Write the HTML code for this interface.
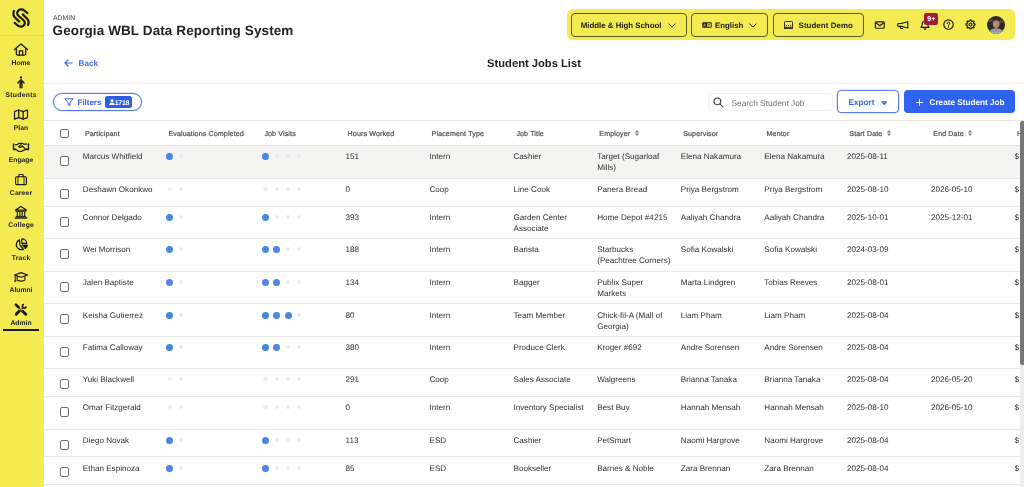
<!DOCTYPE html>
<html lang="en"><head><meta charset="utf-8"><title>Student Jobs List</title>
<style>
*{box-sizing:border-box;margin:0;padding:0}
html,body{text-rendering:geometricPrecision;width:1024px;height:487px;overflow:hidden;background:#fff;font-family:"Liberation Sans",sans-serif;color:#222}
.abs{position:absolute}
#side{position:absolute;left:0;top:0;width:44px;height:487px;background:#f4eb52}
#side .div{position:absolute;left:0;top:35px;width:44px;height:1px;background:#e2d94a}
.nav{position:absolute;left:0;width:42px;text-align:center;font-weight:700;font-size:6.75px;color:#1a1a1a;line-height:8px;letter-spacing:0}
.nav svg{position:absolute;left:50%;transform:translateX(-50%)}
.nav span{position:absolute;left:0;width:42px;top:0}
#top .admin{position:absolute;left:53px;top:14.6px;font-size:6.8px;line-height:8px;color:#3a3a3a;letter-spacing:0.05px}
#top h1{position:absolute;left:52.6px;top:22.5px;font-size:13.5px;line-height:16px;font-weight:700;color:#222;white-space:nowrap;letter-spacing:0.1px}
#tool{position:absolute;left:566.6px;top:9px;width:448px;height:31.4px;background:#f4eb52;border-radius:6px}
.tb{position:absolute;top:4px;height:23.5px;border:1px solid #5c5823;border-radius:4px;font-weight:700;font-size:7.85px;line-height:23.6px;color:#1a1a1a;white-space:nowrap}
.back{position:absolute;left:78.6px;top:58.6px;font-size:8.2px;line-height:10px;font-weight:700;color:#3c69ee}
.title{position:absolute;left:44px;width:980px;top:56.6px;text-align:center;font-size:11.2px;line-height:14px;font-weight:700;color:#222}
.hr{position:absolute;left:44px;right:0;height:1px;background:#ececec}
.filters{position:absolute;left:53px;top:92.8px;width:88.8px;height:18.3px;border:1px solid #5577e2;box-shadow:0 0 0 0.6px #c9d5f7;border-radius:10px;background:#fff}
.filters .t{position:absolute;left:23.6px;top:4.3px;font-size:7.9px;line-height:10px;font-weight:700;color:#3a62dd}
.filters .badge{position:absolute;left:51.2px;top:2.3px;width:26.5px;height:11.6px;border-radius:2.5px;background:#2f5fe0;color:#fff;font-size:6.9px;line-height:15.1px;font-weight:700;padding-left:9.5px;letter-spacing:-0.2px}
.search{position:absolute;left:708px;top:93px;width:125px;height:18px;border:1px solid #f0f0f0;border-radius:3px;background:#fff}
.search .ph{position:absolute;left:22.5px;top:4.2px;font-size:8.3px;line-height:10px;color:#6f6f6f}
.export{position:absolute;left:837px;top:90px;width:62px;height:23px;border:1px solid #5b7fe6;box-shadow:0 0 0 0.6px #cdd8f8;border-radius:4px;background:#fff;color:#3565e8;font-weight:700;font-size:8.2px;line-height:23.3px;padding-left:10.5px}
.create{position:absolute;left:904px;top:90px;width:111px;height:23px;border-radius:4px;background:#2f62ef;color:#fff;font-weight:700;font-size:8.2px;line-height:25.3px;padding-left:25.5px;white-space:nowrap}
#tbl{position:absolute;left:44px;top:120px;width:980px;height:367px;overflow:hidden;font-size:8.1px;line-height:11.3px;color:#2e2e2e}
.thead{position:absolute;left:0;top:0;width:980px;height:26px;border-top:1px solid #e6e6e6;border-bottom:1px solid #e3e3e3;background:#fff}
.th{position:absolute;top:8.6px;font-size:7.1px;line-height:9px;color:#505050;white-space:nowrap;letter-spacing:0.12px;font-weight:400;-webkit-text-stroke:0.22px #505050}
.srt{margin-left:4.6px;position:relative;top:0.3px}
.tr{position:absolute;left:0;width:980px;border-bottom:1px solid #e9e9e9;background:#fff}
.tr.first{background:#f4f4f2}
.td{position:absolute;top:5.5px;white-space:nowrap}
.td.dots{top:6.7px;line-height:0;font-size:0}
.d{display:inline-block;width:4.2px;height:4.2px;border-radius:50%;background:#ebebeb;margin:1.4px 3.55px 0 3.55px;vertical-align:top}
.d.on{width:7px;height:7px;background:#4a86e2;margin:0 2.15px 0 2.15px}
.cb{position:absolute;width:9.5px;height:9.5px;border:1.1px solid #6e6e6e;border-radius:2px;background:#fff}
.track{position:absolute;left:1019.7px;top:120.5px;width:4.3px;height:367px;background:#eeede9}
.thumb{position:absolute;left:1019.7px;top:120.8px;width:4.3px;height:243.8px;background:#767676;border-radius:2.5px 0 0 2.5px}
</style></head>
<body>
<div id="app" style="position:absolute;left:0;top:0;width:1024px;height:487px;overflow:hidden;will-change:transform">
<div id="side">
  <svg class="abs" style="left:11.1px;top:8.2px" width="20" height="20" viewBox="-10 -10 20 20" fill="none" stroke="#1a1a1a" stroke-width="2.15">
    <path d="M7.1,-4.2 L3.4,-7.4 C1.5,-9 -1.5,-9 -2.9,-7.3 C-4.3,-5.6 -4,-3.4 -2.6,-2.2 L2.6,2.2 C4,3.4 4.3,5.6 2.9,7.3 C1.5,9 -1.5,9 -3.4,7.4 L-7.1,4.2"/>
    <path d="M-6.8,-7.9 C-8,-5 -8,-2.5 -6,-0.5 L-1.2,4.1"/>
    <path d="M6.8,7.9 C8,5 8,2.5 6,0.5 L1.2,-4.1"/>
  </svg>
  <div class="div"></div>
  <div class="nav" style="top:0"><svg style="top:42.3px" width="15" height="14" viewBox="0 0 15 14" fill="none" stroke="#1a1a1a" stroke-width="1.25" stroke-linejoin="round" stroke-linecap="round"><path d="M1 7.5L7.5 2.1L14 7.5"/><path d="M2.8 6.4v5.4Q2.8 13 4 13h7Q12.2 13 12.2 11.8V6.4"/><path d="M5.8 13V8.8h3.4V13"/></svg><span style="top:59.5px;letter-spacing:0.00px;padding-left:0.00px">Home</span></div>
<div class="nav" style="top:0"><svg style="top:76.0px" width="8" height="13" viewBox="0 0 8 13" fill="none" stroke="#1a1a1a" stroke-width="1.25" stroke-linejoin="round" stroke-linecap="round"><circle cx="4" cy="1.5" r="1.15" fill="#1a1a1a" stroke="none"/><path d="M0.9 7L4 3.6L7.1 7" stroke-width="1.3"/><path d="M2.4 5.2L4 3.6L5.6 5.2V12.2H2.4z" fill="#2a2a18" stroke="none"/><path d="M4 9v3.2" stroke="#6a6628" stroke-width="0.5"/></svg><span style="top:92.0px;letter-spacing:0.30px;padding-left:0.30px">Students</span></div>
<div class="nav" style="top:0"><svg style="top:109.2px" width="15" height="11" viewBox="0 0 15 11" fill="none" stroke="#1a1a1a" stroke-width="1.25" stroke-linejoin="round" stroke-linecap="round"><path d="M1 2.6L5.2 1l4.4 1.6L14 1v7.6L9.6 10.2L5.2 8.6L1 10.2z"/><path d="M5.2 1v7.6M9.6 2.6v7.6"/></svg><span style="top:124.5px;letter-spacing:0.00px;padding-left:0.00px">Plan</span></div>
<div class="nav" style="top:0"><svg style="top:142.2px" width="17" height="10" viewBox="0 0 17 10" fill="none" stroke="#1a1a1a" stroke-width="1.25" stroke-linejoin="round" stroke-linecap="round"><path d="M1 2v5.5h1.8M16 2v5.5h-1.8" stroke-width="1.6"/><path d="M2.8 2.6h2l2-1.3h3l1.2 0.8h3.2M2.8 7l3.6 2.4c0.8 0.5 1.6 0.5 2.4 0L14.2 7M8.6 2.6L6.3 4.8c0.9 0.9 2 0.7 2.8-0.2l0.7-0.6L12.5 6.6"/></svg><span style="top:157.0px;letter-spacing:0.00px;padding-left:0.00px">Engage</span></div>
<div class="nav" style="top:0"><svg style="top:173.2px" width="14" height="13" viewBox="0 0 14 13" fill="none" stroke="#1a1a1a" stroke-width="1.25" stroke-linejoin="round" stroke-linecap="round"><g transform="translate(0.7,0.65) scale(0.9)"><rect x="1" y="3.4" width="12" height="8.8" rx="1.3"/><path d="M4.6 3.4V1.6c0-0.4 0.3-0.7 0.7-0.7h3.4c0.4 0 0.7 0.3 0.7 0.7v1.8"/><path d="M3.6 3.4v8.8M10.4 3.4v8.8" stroke-width="1"/></g></svg><span style="top:189.5px;letter-spacing:0.17px;padding-left:0.17px">Career</span></div>
<div class="nav" style="top:0"><svg style="top:205.2px" width="14" height="14" viewBox="0 0 14 14" fill="none" stroke="#1a1a1a" stroke-width="1.25" stroke-linejoin="round" stroke-linecap="round"><path d="M1.5 5L7 1.4L12.5 5z"/><path d="M2 6.3h10" stroke-width="1"/><path d="M3.3 7v3.8M5.8 7v3.8M8.2 7v3.8M10.7 7v3.8" stroke-width="1.1"/><path d="M2.2 11.4h9.6" stroke-width="1"/><path d="M1.2 13h11.6" stroke-width="1.3"/></svg><span style="top:222.0px;letter-spacing:0.17px;padding-left:0.17px">College</span></div>
<div class="nav" style="top:0"><svg style="top:238.0px" width="15" height="13" viewBox="0 0 15 13" fill="none" stroke="#1a1a1a" stroke-width="1.25" stroke-linejoin="round" stroke-linecap="round"><g transform="translate(0.5,0)"><path d="M5.4 1.9A5.1 5.1 0 1 0 9.4 11.3L5.9 7z"/><path d="M7.8 1V5.3H12.7A4.8 4.8 0 0 0 7.8 1z"/><path d="M8.2 7H13.6A5.6 5.6 0 0 1 11.5 10.8z" fill="#1a1a1a" stroke-width="0.8"/></g></svg><span style="top:254.5px;letter-spacing:0.20px;padding-left:0.20px">Track</span></div>
<div class="nav" style="top:0"><svg style="top:271.2px" width="17" height="12" viewBox="0 0 17 12" fill="none" stroke="#1a1a1a" stroke-width="1.25" stroke-linejoin="round" stroke-linecap="round"><g transform="translate(0.9,0.7) scale(0.9)"><path d="M1.2 3.6L8.5 1l7.3 2.6L8.5 6.2z"/><path d="M4.2 5.2v4.2c1.2 1.4 7.4 1.4 8.6 0V5.2"/><path d="M2 4.2v5.6" stroke-width="1.1"/><path d="M1.4 10.6h1.3" stroke-width="1.4"/></g></svg><span style="top:287.0px;letter-spacing:0.00px;padding-left:0.00px">Alumni</span></div>
<div class="nav" style="top:0"><svg style="top:299.0px" width="24" height="20" viewBox="0 0 24 20" fill="none" stroke="#1a1a1a" stroke-width="1.25" stroke-linejoin="round" stroke-linecap="round"><path d="M6.9 5.6L9.5 8.2" stroke-width="2.7"/><path d="M9.5 8.2L13.6 12.3" stroke-width="1"/><path d="M13.7 12.4L16.8 15.3" stroke-width="2.9"/><path d="M14.9 5.3A1.9 1.9 0 1 0 17.1 7.5" stroke-width="1.8" stroke-linecap="butt"/><path d="M14 8.6L12.9 9.7" stroke-width="1.6" stroke-linecap="butt"/><path d="M10.4 12L7.3 15.1" stroke-width="2.9"/></svg><span style="top:319.5px;letter-spacing:0.00px;padding-left:0.00px">Admin</span></div>
<div class="abs" style="left:3.3px;top:329px;width:35.6px;height:2px;background:#1a1a1a"></div>
</div>
<div id="top">
  <div class="admin">ADMIN</div>
  <h1>Georgia WBL Data Reporting System</h1>
  <div id="tool">
    <div class="tb" style="left:4.2px;width:115.8px;padding-left:9px">Middle &amp; High School</div>
    <div class="tb" style="left:124.4px;width:77px;padding-left:23px">English</div>
    <div class="tb" style="left:206.3px;width:91.4px;padding-left:24.7px;letter-spacing:0.09px">Student Demo</div>
    <svg class="abs" style="left:101.0px;top:13.5px" width="8" height="5" viewBox="0 0 8 5" fill="none" stroke="#1a1a1a" stroke-width="0.95" stroke-linejoin="round" stroke-linecap="round"><path d="M0.7 0.8l3.3 3.3l3.3-3.3"/></svg>
<svg class="abs" style="left:182.2px;top:13.5px" width="8" height="5" viewBox="0 0 8 5" fill="none" stroke="#1a1a1a" stroke-width="0.95" stroke-linejoin="round" stroke-linecap="round"><path d="M0.7 0.8l3.3 3.3l3.3-3.3"/></svg>
<svg class="abs" style="left:135.0px;top:13.1px" width="10" height="6" viewBox="0 0 10 6" ><rect x="0.3" y="0.3" width="9.4" height="5.4" rx="0.9" fill="#1a1a1a" stroke="none"/><rect x="5.3" y="1.2" width="3.5" height="3.6" fill="#f4eb52" stroke="none"/><path d="M1.5 4.6l1.1-3l1.1 3M1.9 3.7h1.4" stroke-width="0.55" stroke="#f4eb52" fill="none"/><path d="M6 2.3h2.1M7.05 1.8v0.5M6.3 4.2c0.9-0.4 1.3-1 1.4-1.9" stroke-width="0.5" stroke="#1a1a1a" fill="none"/></svg>
<svg class="abs" style="left:217.2px;top:12.0px" width="9" height="7.8" viewBox="0 0 9 7.8" fill="none" stroke="#1a1a1a" stroke-width="1.15" stroke-linejoin="round" stroke-linecap="round"><path d="M0.5 7.4V1.3Q0.5 0.5 1.3 0.5H7.7Q8.5 0.5 8.5 1.3V7.4" stroke-width="0.9"/><circle cx="2.3" cy="4.7" r="0.6" fill="#1a1a1a" stroke="none"/><circle cx="4.5" cy="4.7" r="0.6" fill="#1a1a1a" stroke="none"/><circle cx="6.7" cy="4.7" r="0.6" fill="#1a1a1a" stroke="none"/><path d="M1.6 7.6V6.3h1.4V7.6M3.8 7.6V6.3h1.4V7.6M6 7.6V6.3h1.4V7.6" stroke-width="0.7" fill="#1a1a1a"/><path d="M0 7.5h9" stroke-width="0.6"/></svg>
<svg class="abs" style="left:307.8px;top:11.8px" width="11" height="8" viewBox="0 0 11 8" fill="none" stroke="#1a1a1a" stroke-width="1.15" stroke-linejoin="round" stroke-linecap="round"><rect x="1.3" y="0.8" width="8.9" height="6.4" rx="1"/><path d="M1.8 1.7L5.75 4.7L9.7 1.7"/></svg>
<svg class="abs" style="left:330.1px;top:11.7px" width="12" height="8.6" viewBox="0 0 12 8.6" fill="none" stroke="#1a1a1a" stroke-width="1.15" stroke-linejoin="round" stroke-linecap="round"><path d="M10.8 0.8v6.2L4.2 5.4H1.6c-0.5 0-0.9-0.4-0.9-0.9V3.4c0-0.5 0.4-0.9 0.9-0.9h2.6z"/><path d="M3.2 5.6l0.6 1.8c0.2 0.5 0.7 0.6 1.2 0.4l0.6-0.2" /></svg>
<svg class="abs" style="left:353.9px;top:11.4px" width="10" height="10.4" viewBox="0 0 10 10.4" fill="none" stroke="#1a1a1a" stroke-width="1.15" stroke-linejoin="round" stroke-linecap="round"><path d="M1 7.4c1-1 1.2-1.8 1.2-3.4a2.8 2.8 0 0 1 5.6 0c0 1.6 0.2 2.4 1.2 3.4z"/><path d="M4.2 8.8c0.3 0.8 1.3 0.8 1.6 0" /></svg>
<div class="abs" style="left:357.9px;top:4.0px;width:13.5px;height:11.8px;border-radius:2.2px;background:#a11d3c;color:#fff;font-weight:700;font-size:7px;line-height:13.6px;text-align:center;letter-spacing:-0.1px">9+</div>
<svg class="abs" style="left:376.2px;top:9.9px" width="11" height="11" viewBox="0 0 11 11" fill="none" stroke="#1a1a1a" stroke-width="1.15" stroke-linejoin="round" stroke-linecap="round"><circle cx="5.5" cy="5.5" r="4.7"/><path d="M4.2 4.4a1.3 1.3 0 1 1 1.9 1.2c-0.4 0.2-0.6 0.5-0.6 0.9" stroke-width="1"/><circle cx="5.5" cy="7.9" r="0.6" fill="#1a1a1a" stroke="none"/></svg>
<svg class="abs" style="left:398.8px;top:9.9px" width="11" height="11" viewBox="0 0 11 11" fill="none" stroke="#1a1a1a" stroke-width="1.15" stroke-linejoin="round" stroke-linecap="round"><circle cx="5.5" cy="5.5" r="1.5"/><path d="M8.92 4.74L10.01 4.93L10.01 6.07L8.92 6.26L8.46 7.38L9.10 8.29L8.29 9.10L7.38 8.46L6.26 8.92L6.07 10.01L4.93 10.01L4.74 8.92L3.62 8.46L2.71 9.10L1.90 8.29L2.54 7.38L2.08 6.26L0.99 6.07L0.99 4.93L2.08 4.74L2.54 3.62L1.90 2.71L2.71 1.90L3.62 2.54L4.74 2.08L4.93 0.99L6.07 0.99L6.26 2.08L7.38 2.54L8.29 1.90L9.10 2.71L8.46 3.62Z"/></svg>
<svg class="abs" style="left:420.5px;top:7.0px" width="18" height="18" viewBox="0 0 18 18"><defs><clipPath id="av"><circle cx="9" cy="9" r="9"/></clipPath></defs><g clip-path="url(#av)"><rect width="18" height="18" fill="#2d262a"/><ellipse cx="4" cy="4.6" rx="3.6" ry="1.6" fill="#6a4a2a" opacity="0.85"/><ellipse cx="14.4" cy="5.2" rx="3.2" ry="1.6" fill="#6a4a2a" opacity="0.85"/><path d="M1.2 18C2.6 13.6 5.8 12.2 9.2 12.5C12.6 12.2 15.6 13.6 17 18z" fill="#a4a8b2"/><path d="M3 15.5h12M4 14h10" stroke="#7f8590" stroke-width="0.5" fill="none"/><rect x="7.7" y="10.2" width="3" height="3.2" fill="#a07462"/><path d="M7.5 12.6L9.2 15.2L10.9 12.6z" fill="#a87c69"/><ellipse cx="9.2" cy="7.7" rx="3.4" ry="4.1" fill="#b48a76"/><path d="M5.7 7C5.5 3.2 7.3 2.2 9.2 2.2S12.9 3.2 12.7 7C12 5 11 4.6 9.2 4.6S6.4 5 5.7 7z" fill="#3d2b22"/></g></svg>
  </div>
</div>
<svg class="abs" style="left:64px;top:58.5px" width="9" height="8" viewBox="0 0 9 8" fill="none" stroke="#3c69ee" stroke-width="1.2" stroke-linecap="round" stroke-linejoin="round"><path d="M8 4H1M4 1L1 4l3 3"/></svg>
<div class="back">Back</div>
<div class="title">Student Jobs List</div>
<div class="hr" style="top:82.6px"></div>
<div class="filters">
  <svg class="abs" style="left:9.6px;top:4.4px" width="10" height="9" viewBox="0 0 10 9" fill="none" stroke="#3a62dd" stroke-width="1" stroke-linejoin="round"><path d="M0.8 0.8h8.4L5.9 4.6v3L4.1 6.8V4.6z"/></svg>
  <span class="t">Filters</span>
  <span class="badge">1718
    <svg class="abs" style="left:3.4px;top:2.8px" width="6" height="6" viewBox="0 0 6 6" fill="#fff"><circle cx="3" cy="1.6" r="1.5"/><path d="M0.2 6c0-1.7 1.2-2.5 2.8-2.5S5.8 4.3 5.8 6z"/></svg>
  </span>
</div>
<div class="search">
  <svg class="abs" style="left:3.5px;top:3.4px" width="11" height="11" viewBox="0 0 11 11" fill="none" stroke="#333" stroke-width="1.05" stroke-linecap="round"><circle cx="4.4" cy="4.4" r="3.4"/><path d="M7 7L9.8 9.8"/></svg>
  <span class="ph">Search Student Job</span>
</div>
<div class="export">Export
  <svg class="abs" style="left:42.8px;top:9.9px" width="6.4" height="4.4" viewBox="0 0 6.4 4.4" fill="none" stroke="#3565e8" stroke-width="1.2" stroke-linejoin="round"><path d="M0.9 0.8h4.6L3.2 3.5z"/></svg>
</div>
<div class="create">Create Student Job
  <svg class="abs" style="left:11.5px;top:8.7px" width="7" height="7" viewBox="0 0 7 7" stroke="#fff" stroke-width="0.9" stroke-linecap="round"><path d="M3.5 0.3v6.4M0.3 3.5h6.4"/></svg>
</div>
<div id="tbl">
<div class="thead">
<span class="cb" style="left:15.5px;top:7.5px"></span>
<span class="th" style="left:40.9px">Participant</span>
<span class="th" style="left:124.4px">Evaluations Completed</span>
<span class="th" style="left:220.4px">Job Visits</span>
<span class="th" style="left:303.6px">Hours Worked</span>
<span class="th" style="left:387.6px">Placement Type</span>
<span class="th" style="left:472.4px">Job Title</span>
<span class="th" style="left:555.3px">Employer<svg class="srt" viewBox="0 0 6 9" width="4" height="6"><path d="M3 0 L6 3.6 H0 Z M3 9 L6 5.4 H0 Z" fill="#7a7a7a"/></svg></span>
<span class="th" style="left:639.2px">Supervisor</span>
<span class="th" style="left:722.6px">Mentor</span>
<span class="th" style="left:805.3px">Start Date<svg class="srt" viewBox="0 0 6 9" width="4" height="6"><path d="M3 0 L6 3.6 H0 Z M3 9 L6 5.4 H0 Z" fill="#7a7a7a"/></svg></span>
<span class="th" style="left:889.3px">End Date<svg class="srt" viewBox="0 0 6 9" width="4" height="6"><path d="M3 0 L6 3.6 H0 Z M3 9 L6 5.4 H0 Z" fill="#7a7a7a"/></svg></span>
<span class="th" style="left:973.0px">H</span>
</div>
<div class="tr first" style="top:26.0px;height:33.0px">
<span class="cb" style="left:15.5px;top:10.2px"></span>
<span class="td" style="left:38.8px;top:5.0px">Marcus Whitfield</span>
<span class="td dots" style="left:120.1px;top:6.5px"><i class="d on"></i><i class="d"></i></span>
<span class="td dots" style="left:215.8px;top:6.5px"><i class="d on"></i><i class="d"></i><i class="d"></i><i class="d"></i></span>
<span class="td" style="left:301.5px;top:5.0px">151</span>
<span class="td" style="left:385.5px;top:5.0px">Intern</span>
<span class="td" style="left:469.5px;top:5.0px">Cashier</span>
<span class="td" style="left:553.2px;top:5.0px">Target (Sugarloaf<br>Mills)</span>
<span class="td" style="left:636.8px;top:5.0px">Elena Nakamura</span>
<span class="td" style="left:720.3px;top:5.0px">Elena Nakamura</span>
<span class="td" style="left:803.0px;top:5.0px">2025-08-11</span>
<span class="td" style="left:887.0px;top:5.0px"></span>
<span class="td" style="left:970.5px;top:5.0px">$</span>
</div>
<div class="tr" style="top:59.0px;height:28.0px">
<span class="cb" style="left:15.5px;top:10.2px"></span>
<span class="td" style="left:38.8px;top:5.0px">Deshawn Okonkwo</span>
<span class="td dots" style="left:120.1px;top:6.5px"><i class="d"></i><i class="d"></i></span>
<span class="td dots" style="left:215.8px;top:6.5px"><i class="d"></i><i class="d"></i><i class="d"></i><i class="d"></i></span>
<span class="td" style="left:301.5px;top:5.0px">0</span>
<span class="td" style="left:385.5px;top:5.0px">Coop</span>
<span class="td" style="left:469.5px;top:5.0px">Line Cook</span>
<span class="td" style="left:553.2px;top:5.0px">Panera Bread</span>
<span class="td" style="left:636.8px;top:5.0px">Priya Bergstrom</span>
<span class="td" style="left:720.3px;top:5.0px">Priya Bergstrom</span>
<span class="td" style="left:803.0px;top:5.0px">2025-08-10</span>
<span class="td" style="left:887.0px;top:5.0px">2026-05-10</span>
<span class="td" style="left:970.5px;top:5.0px">$</span>
</div>
<div class="tr" style="top:87.0px;height:32.0px">
<span class="cb" style="left:15.5px;top:10.2px"></span>
<span class="td" style="left:38.8px;top:5.0px">Connor Delgado</span>
<span class="td dots" style="left:120.1px;top:6.5px"><i class="d on"></i><i class="d"></i></span>
<span class="td dots" style="left:215.8px;top:6.5px"><i class="d on"></i><i class="d"></i><i class="d"></i><i class="d"></i></span>
<span class="td" style="left:301.5px;top:5.0px">393</span>
<span class="td" style="left:385.5px;top:5.0px">Intern</span>
<span class="td" style="left:469.5px;top:5.0px">Garden Center<br>Associate</span>
<span class="td" style="left:553.2px;top:5.0px">Home Depot #4215</span>
<span class="td" style="left:636.8px;top:5.0px">Aaliyah Chandra</span>
<span class="td" style="left:720.3px;top:5.0px">Aaliyah Chandra</span>
<span class="td" style="left:803.0px;top:5.0px">2025-10-01</span>
<span class="td" style="left:887.0px;top:5.0px">2025-12-01</span>
<span class="td" style="left:970.5px;top:5.0px">$</span>
</div>
<div class="tr" style="top:119.0px;height:33.0px">
<span class="cb" style="left:15.5px;top:10.2px"></span>
<span class="td" style="left:38.8px;top:5.0px">Wei Morrison</span>
<span class="td dots" style="left:120.1px;top:6.5px"><i class="d on"></i><i class="d"></i></span>
<span class="td dots" style="left:215.8px;top:6.5px"><i class="d on"></i><i class="d on"></i><i class="d"></i><i class="d"></i></span>
<span class="td" style="left:301.5px;top:5.0px">188</span>
<span class="td" style="left:385.5px;top:5.0px">Intern</span>
<span class="td" style="left:469.5px;top:5.0px">Barista</span>
<span class="td" style="left:553.2px;top:5.0px">Starbucks<br>(Peachtree Corners)</span>
<span class="td" style="left:636.8px;top:5.0px">Sofia Kowalski</span>
<span class="td" style="left:720.3px;top:5.0px">Sofia Kowalski</span>
<span class="td" style="left:803.0px;top:5.0px">2024-03-09</span>
<span class="td" style="left:887.0px;top:5.0px"></span>
<span class="td" style="left:970.5px;top:5.0px">$</span>
</div>
<div class="tr" style="top:152.0px;height:32.0px">
<span class="cb" style="left:15.5px;top:10.2px"></span>
<span class="td" style="left:38.8px;top:5.0px">Jalen Baptiste</span>
<span class="td dots" style="left:120.1px;top:6.5px"><i class="d on"></i><i class="d"></i></span>
<span class="td dots" style="left:215.8px;top:6.5px"><i class="d on"></i><i class="d on"></i><i class="d"></i><i class="d"></i></span>
<span class="td" style="left:301.5px;top:5.0px">134</span>
<span class="td" style="left:385.5px;top:5.0px">Intern</span>
<span class="td" style="left:469.5px;top:5.0px">Bagger</span>
<span class="td" style="left:553.2px;top:5.0px">Publix Super<br>Markets</span>
<span class="td" style="left:636.8px;top:5.0px">Marta Lindgren</span>
<span class="td" style="left:720.3px;top:5.0px">Tobias Reeves</span>
<span class="td" style="left:803.0px;top:5.0px">2025-08-01</span>
<span class="td" style="left:887.0px;top:5.0px"></span>
<span class="td" style="left:970.5px;top:5.0px">$</span>
</div>
<div class="tr" style="top:184.0px;height:33.0px">
<span class="cb" style="left:15.5px;top:10.2px"></span>
<span class="td" style="left:38.8px;top:6.0px">Keisha Gutierrez</span>
<span class="td dots" style="left:120.1px;top:7.5px"><i class="d on"></i><i class="d"></i></span>
<span class="td dots" style="left:215.8px;top:7.5px"><i class="d on"></i><i class="d on"></i><i class="d on"></i><i class="d"></i></span>
<span class="td" style="left:301.5px;top:6.0px">80</span>
<span class="td" style="left:385.5px;top:6.0px">Intern</span>
<span class="td" style="left:469.5px;top:6.0px">Team Member</span>
<span class="td" style="left:553.2px;top:6.0px">Chick-fil-A (Mall of<br>Georgia)</span>
<span class="td" style="left:636.8px;top:6.0px">Liam Pham</span>
<span class="td" style="left:720.3px;top:6.0px">Liam Pham</span>
<span class="td" style="left:803.0px;top:6.0px">2025-08-04</span>
<span class="td" style="left:887.0px;top:6.0px"></span>
<span class="td" style="left:970.5px;top:6.0px">$</span>
</div>
<div class="tr" style="top:217.0px;height:32.0px">
<span class="cb" style="left:15.5px;top:10.2px"></span>
<span class="td" style="left:38.8px;top:5.0px">Fatima Calloway</span>
<span class="td dots" style="left:120.1px;top:6.5px"><i class="d on"></i><i class="d"></i></span>
<span class="td dots" style="left:215.8px;top:6.5px"><i class="d on"></i><i class="d on"></i><i class="d"></i><i class="d"></i></span>
<span class="td" style="left:301.5px;top:5.0px">380</span>
<span class="td" style="left:385.5px;top:5.0px">Intern</span>
<span class="td" style="left:469.5px;top:5.0px">Produce Clerk</span>
<span class="td" style="left:553.2px;top:5.0px">Kroger #692</span>
<span class="td" style="left:636.8px;top:5.0px">Andre Sorensen</span>
<span class="td" style="left:720.3px;top:5.0px">Andre Sorensen</span>
<span class="td" style="left:803.0px;top:5.0px">2025-08-04</span>
<span class="td" style="left:887.0px;top:5.0px"></span>
<span class="td" style="left:970.5px;top:5.0px">$</span>
</div>
<div class="tr" style="top:249.0px;height:28.0px">
<span class="cb" style="left:15.5px;top:10.2px"></span>
<span class="td" style="left:38.8px;top:5.0px">Yuki Blackwell</span>
<span class="td dots" style="left:120.1px;top:6.5px"><i class="d"></i><i class="d"></i></span>
<span class="td dots" style="left:215.8px;top:6.5px"><i class="d"></i><i class="d"></i><i class="d"></i><i class="d"></i></span>
<span class="td" style="left:301.5px;top:5.0px">291</span>
<span class="td" style="left:385.5px;top:5.0px">Coop</span>
<span class="td" style="left:469.5px;top:5.0px">Sales Associate</span>
<span class="td" style="left:553.2px;top:5.0px">Walgreens</span>
<span class="td" style="left:636.8px;top:5.0px">Brianna Tanaka</span>
<span class="td" style="left:720.3px;top:5.0px">Brianna Tanaka</span>
<span class="td" style="left:803.0px;top:5.0px">2025-08-04</span>
<span class="td" style="left:887.0px;top:5.0px">2026-05-20</span>
<span class="td" style="left:970.5px;top:5.0px">$</span>
</div>
<div class="tr" style="top:277.0px;height:33.0px">
<span class="cb" style="left:15.5px;top:10.2px"></span>
<span class="td" style="left:38.8px;top:5.0px">Omar Fitzgerald</span>
<span class="td dots" style="left:120.1px;top:6.5px"><i class="d"></i><i class="d"></i></span>
<span class="td dots" style="left:215.8px;top:6.5px"><i class="d"></i><i class="d"></i><i class="d"></i><i class="d"></i></span>
<span class="td" style="left:301.5px;top:5.0px">0</span>
<span class="td" style="left:385.5px;top:5.0px">Intern</span>
<span class="td" style="left:469.5px;top:5.0px">Inventory Specialist</span>
<span class="td" style="left:553.2px;top:5.0px">Best Buy</span>
<span class="td" style="left:636.8px;top:5.0px">Hannah Mensah</span>
<span class="td" style="left:720.3px;top:5.0px">Hannah Mensah</span>
<span class="td" style="left:803.0px;top:5.0px">2025-08-10</span>
<span class="td" style="left:887.0px;top:5.0px">2026-05-10</span>
<span class="td" style="left:970.5px;top:5.0px">$</span>
</div>
<div class="tr" style="top:310.0px;height:27.0px">
<span class="cb" style="left:15.5px;top:10.2px"></span>
<span class="td" style="left:38.8px;top:5.0px">Diego Novak</span>
<span class="td dots" style="left:120.1px;top:6.5px"><i class="d on"></i><i class="d"></i></span>
<span class="td dots" style="left:215.8px;top:6.5px"><i class="d on"></i><i class="d"></i><i class="d"></i><i class="d"></i></span>
<span class="td" style="left:301.5px;top:5.0px">113</span>
<span class="td" style="left:385.5px;top:5.0px">ESD</span>
<span class="td" style="left:469.5px;top:5.0px">Cashier</span>
<span class="td" style="left:553.2px;top:5.0px">PetSmart</span>
<span class="td" style="left:636.8px;top:5.0px">Naomi Hargrove</span>
<span class="td" style="left:720.3px;top:5.0px">Naomi Hargrove</span>
<span class="td" style="left:803.0px;top:5.0px">2025-08-04</span>
<span class="td" style="left:887.0px;top:5.0px"></span>
<span class="td" style="left:970.5px;top:5.0px">$</span>
</div>
<div class="tr" style="top:337.0px;height:28.0px">
<span class="cb" style="left:15.5px;top:10.2px"></span>
<span class="td" style="left:38.8px;top:6.0px">Ethan Espinoza</span>
<span class="td dots" style="left:120.1px;top:7.5px"><i class="d on"></i><i class="d"></i></span>
<span class="td dots" style="left:215.8px;top:7.5px"><i class="d on"></i><i class="d"></i><i class="d"></i><i class="d"></i></span>
<span class="td" style="left:301.5px;top:6.0px">85</span>
<span class="td" style="left:385.5px;top:6.0px">ESD</span>
<span class="td" style="left:469.5px;top:6.0px">Bookseller</span>
<span class="td" style="left:553.2px;top:6.0px">Barnes &amp; Noble</span>
<span class="td" style="left:636.8px;top:6.0px">Zara Brennan</span>
<span class="td" style="left:720.3px;top:6.0px">Zara Brennan</span>
<span class="td" style="left:803.0px;top:6.0px">2025-08-04</span>
<span class="td" style="left:887.0px;top:6.0px"></span>
<span class="td" style="left:970.5px;top:6.0px">$</span>
</div>
</div>
<div class="track"></div>
<div class="thumb"></div>
</div>
</body></html>
